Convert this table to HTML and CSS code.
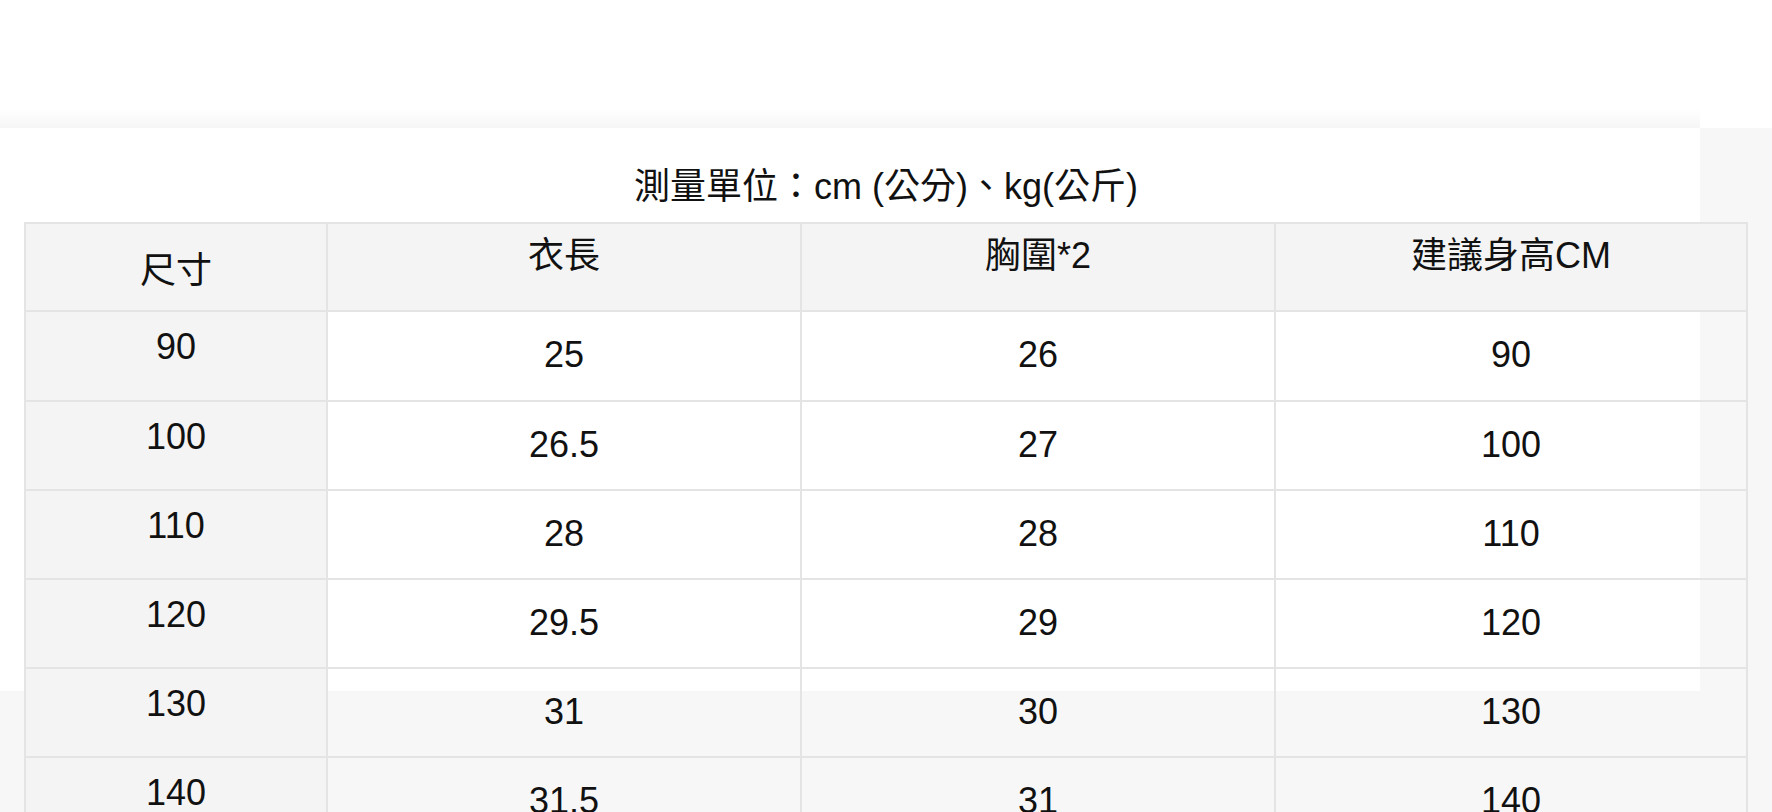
FILE: index.html
```html
<!DOCTYPE html>
<html lang="zh-Hant">
<head>
<meta charset="utf-8">
<title>尺寸表</title>
<link rel="stylesheet" href="styles.css">
</head>
<body>
  <div class="top"></div>
  <div class="band"></div>
  <div class="stage">
    <div class="panel">
      <div class="sheet">
        <h2 class="caption">測量單位：cm (公分)、kg(公斤)</h2>
        <div class="grid">
          <div class="cell head first">尺寸</div>
          <div class="cell head">衣長</div>
          <div class="cell head">胸圍*2</div>
          <div class="cell head last">建議身高CM</div>

          <div class="cell first">90</div>
          <div class="cell">25</div>
          <div class="cell">26</div>
          <div class="cell last">90</div>

          <div class="cell first">100</div>
          <div class="cell">26.5</div>
          <div class="cell">27</div>
          <div class="cell last">100</div>

          <div class="cell first">110</div>
          <div class="cell">28</div>
          <div class="cell">28</div>
          <div class="cell last">110</div>

          <div class="cell first">120</div>
          <div class="cell">29.5</div>
          <div class="cell">29</div>
          <div class="cell last">120</div>

          <div class="cell first">130</div>
          <div class="cell">31</div>
          <div class="cell">30</div>
          <div class="cell last">130</div>

          <div class="cell first">140</div>
          <div class="cell">31.5</div>
          <div class="cell">31</div>
          <div class="cell last">140</div>
        </div>
      </div>
    </div>
  </div>
</body>
</html>
```
FILE: styles.css
```css
html, body {
  margin: 0;
  padding: 0;
  height: 100%;
  overflow: hidden;
  background: #ffffff;
  font-family: "Liberation Sans", Arial, "Noto Sans CJK TC", sans-serif;
  color: #111111;
}

.top {
  height: 110px;
  background: #ffffff;
}

.band {
  width: 1700px;
  height: 18px;
  background: linear-gradient(to bottom, #ffffff, #f6f6f6);
}

.stage {
  background: #f7f7f7;
  height: 684px;
}

.panel {
  width: 1700px;
  height: 563px;
  background: #ffffff;
  padding: 39px 0 0 24px;
  box-sizing: border-box;
}

.sheet {
  width: 1724px;
}

.caption {
  margin: 0 0 15px 0;
  font-size: 36px;
  line-height: 40px;
  height: 40px;
  font-weight: normal;
  text-align: center;
}

.grid {
  display: grid;
  grid-template-columns: 302px 474px 474px 472px;
  grid-template-rows: 88px 90px;
  grid-auto-rows: 89px;
  border-top: 2px solid #e4e4e4;
  border-left: 2px solid #e4e4e4;
  font-size: 36px;
  line-height: 40px;
}

.cell {
  box-sizing: border-box;
  border-right: 2px solid #e4e4e4;
  border-bottom: 2px solid #e4e4e4;
  text-align: center;
  padding-top: 23px;
}

.cell.first {
  background: #f4f4f4;
  padding-top: 15px;
}

.cell.head {
  background: #f4f4f4;
  padding-top: 12px;
}

.cell.head.first {
  padding-top: 27px;
}
```
